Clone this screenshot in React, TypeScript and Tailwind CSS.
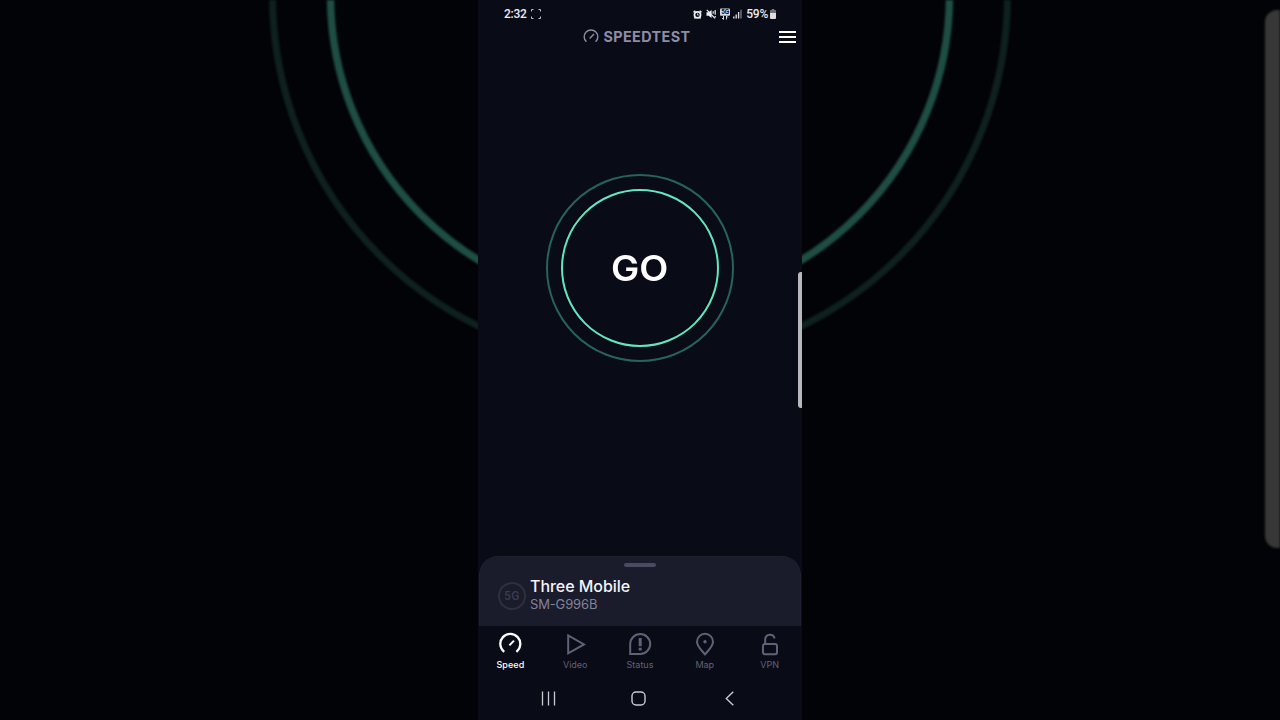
import { ReactNode } from "react";

const tabs: { label: string; active?: boolean; icon: ReactNode }[] = [
  {
    label: "Speed",
    active: true,
    icon: (
      <>
        <path d="M6.2 19.8A10 10 0 1 1 18.4 19.8" />
        <path d="M11.4 13.4L16 8.6" strokeWidth="2" />
      </>
    ),
  },
  { label: "Video", icon: <path d="M5.2 3.4V21.4L21 12.4Z" /> },
  {
    label: "Status",
    icon: (
      <>
        <path d="M2.2 22V12A10 10 0 1 1 12.2 22Z" />
        <path d="M12.2 6V14.2M12.2 15.8V18.4" strokeWidth="3" />
      </>
    ),
  },
  {
    label: "Map",
    icon: (
      <>
        <path d="M12 22.4C8.6 18.2 4 14.6 4 9.8A8 8 0 0 1 20 9.8C20 14.6 15.4 18.2 12 22.4Z" />
        <circle cx="12" cy="9.8" r="1.7" fill="currentColor" stroke="none" />
      </>
    ),
  },
  {
    label: "VPN",
    icon: (
      <>
        <rect x="5" y="12" width="14" height="10.2" rx="2" />
        <path d="M7.2 12V7A4.8 4.8 0 0 1 16.6 6.4" />
      </>
    ),
  },
];

function Backdrop() {
  return (
    <div className="absolute inset-0 bg-[#020307]">
      <svg className="h-full w-full blur-[0.8px]" viewBox="0 0 1280 720" fill="none">
        <circle cx="640" cy="-4" r="367.5" stroke="#0e211f" strokeWidth="7" />
        <circle cx="640" cy="-4" r="309.5" stroke="#1e4e43" strokeWidth="7.5" />
        <rect x="1265" y="10" width="40" height="538" rx="12" fill="#373737" />
      </svg>
    </div>
  );
}

function StatusBar() {
  return (
    <div className="flex h-7 items-center justify-between pl-[26px] pr-[26px] font-['Roboto',sans-serif] text-[12px] font-medium leading-4 tracking-[-0.25px] text-[#eeeef2]">
      <div className="flex items-center gap-1">
        <span>2:32</span>
        <svg className="h-[10px] w-[10px]" viewBox="0 0 10 10" fill="none" stroke="#c0c0c8" strokeWidth="1">
          <path d="M.5 2.5V.5H2.5M7.5 .5H9.5V2.5M9.5 7.5V9.5H7.5M2.5 9.5H.5V7.5" />
        </svg>
      </div>
      <div className="flex items-center">
        <svg className="mr-1 h-[9px] w-[9px]" viewBox="0 0 10 10" fill="none" stroke="#eeeef2">
          <circle cx="5" cy="5.4" r="3.4" strokeWidth="1.9" />
          <path d="M.6 2.6L2.6 .9M9.4 2.6L7.4 .9M1.6 9.4L2.6 8.2M8.4 9.4L7.4 8.2" strokeWidth="1.6" />
          <path d="M5 3.8V5.6H6.4" strokeWidth=".9" />
        </svg>
        <svg className="mr-1 h-[10px] w-[10px]" viewBox="0 0 10 10" fill="none" stroke="#eeeef2">
          <path d="M.5 3.2H2.6L5.6 1V9L2.6 6.8H.5Z" fill="#eeeef2" stroke="none" />
          <path d="M.8 .8L9 9.4" strokeWidth="1.2" />
          <path d="M7.2 2.2V4.8M9.2 1V5.8M9.2 7V8.6" strokeWidth="1.2" />
        </svg>
        <svg className="mr-[3px] h-3 w-[10px]" viewBox="0 0 10 12">
          <rect x="0" y=".5" width="10" height="7.2" rx="1" fill="#d9d9de" />
          <text x="5" y="6.4" textAnchor="middle" fontSize="6.5" fontWeight="700" fill="#0b0c18">
            5G
          </text>
          <path d="M3.5 8V11.5M2 10L3.5 11.5M6.5 11.5V8M8 9.5L6.5 8" stroke="#d9d9de" fill="none" />
        </svg>
        <svg className="mr-1 h-[10px] w-[9px]" viewBox="0 0 9 10" strokeWidth="1.4" stroke="#d9d9de">
          <path d="M.8 7.5V9.5M3.2 5.5V9.5M5.6 3V9.5" />
          <path d="M8 .8V9.5" stroke="#777781" />
        </svg>
        <span>59%</span>
        <svg className="ml-[2px] h-[10px] w-[6px]" viewBox="0 0 7 10" preserveAspectRatio="none">
          <path d="M2 0H5V1H6A1 1 0 0 1 7 2V4H0V2A1 1 0 0 1 1 1H2Z" fill="#73737c" />
          <path d="M0 4H7V9A1 1 0 0 1 6 10H1A1 1 0 0 1 0 9Z" fill="#dededf" />
        </svg>
      </div>
    </div>
  );
}

function Header() {
  return (
    <div className="grid h-[18px] grid-cols-[1fr_auto_1fr] items-center pr-[6px]">
      <span />
      <div className="flex items-center gap-1 text-[#8e8da3]">
        <svg className="h-4 w-4" viewBox="0 0 16 16" fill="none" stroke="currentColor" strokeWidth="1.4">
          <path d="M3.4 12.8A6.8 6.8 0 1 1 12.6 12.8" />
          <path d="M6.6 9.6L11 5" />
        </svg>
        <h1 className="text-[14.4px] font-bold leading-none tracking-[0.4px]">SPEEDTEST</h1>
      </div>
      <button className="justify-self-end" aria-label="Menu">
        <svg className="h-3 w-[17px]" viewBox="0 0 17 12" stroke="#fff" strokeWidth="2">
          <path d="M0 1H17M0 6H17M0 11H17" />
        </svg>
      </button>
    </div>
  );
}

export default function App() {
  return (
    <div className="relative flex h-[720px] w-[1280px] justify-center overflow-hidden">
      <Backdrop />
      <div className="relative flex w-[324px] flex-col bg-[#090b17] font-['Inter',sans-serif]">
        <StatusBar />
        <Header />

        {/* Go button */}
        <div className="flex flex-1 justify-center pt-32">
          <button className="flex h-[188px] w-[188px] items-center justify-center rounded-full border-2 border-[#28625d]">
            <span className="flex h-[158px] w-[158px] items-center justify-center rounded-full border-2 border-[#62e8bf] text-[35px] font-semibold text-white">
              <span className="scale-x-[1.08]">GO</span>
            </span>
          </button>
        </div>

        {/* Connection card */}
        <div className="mx-px flex h-[70px] flex-col rounded-t-[19px] border border-b-0 border-[#1f2030] bg-[#1a1b2b]">
          <div className="mx-auto mt-[6px] h-1 w-8 rounded-full bg-[#4b4a61]" />
          <div className="flex items-center gap-1 pl-[18px] pt-[9px]">
            <span className="mt-[3px] flex h-7 w-7 items-center justify-center rounded-full border-2 border-[#2f2f42] font-['Roboto',sans-serif] text-[12px] font-medium tracking-[0.5px] text-[#3c3c50]">
              5G
            </span>
            <div>
              <p className="text-base font-medium leading-[20px] tracking-[-0.05px] text-[#f4f4f8]">Three Mobile</p>
              <p className="text-[13px] leading-4 tracking-[-0.15px] text-[#83829a]">SM-G996B</p>
            </div>
          </div>
        </div>

        {/* Tabs */}
        <nav className="grid h-[50px] grid-cols-5 pt-[6px]">
          {tabs.map((tab) => (
            <button
              key={tab.label}
              className={`flex flex-col items-center ${tab.active ? "text-white" : "text-[#626175]"}`}
            >
              <svg
                className="h-6 w-6"
                viewBox="0 0 24 24"
                fill="none"
                stroke="currentColor"
                strokeWidth={tab.active ? 2.3 : 2}
              >
                {tab.icon}
              </svg>
              <span className={`text-[9px] leading-[18px] ${tab.active ? "font-medium tracking-[0.1px]" : ""}`}>
                {tab.label}
              </span>
            </button>
          ))}
        </nav>

        {/* System navigation */}
        <div className="flex h-11 items-center pl-[63px] text-[#c9c9d0]">
          <svg className="h-[15px] w-[15px]" viewBox="0 0 15 15" stroke="currentColor" strokeWidth="1.3">
            <path d="M1.5 .5V14.5M7.5 .5V14.5M13.5 .5V14.5" />
          </svg>
          <svg
            className="ml-[75px] h-[15px] w-[15px]"
            viewBox="0 0 15 15"
            fill="none"
            stroke="currentColor"
            strokeWidth="1.4"
          >
            <rect x="1" y="1" width="13" height="13" rx="4" />
          </svg>
          <svg
            className="ml-[79px] h-[15px] w-[9px]"
            viewBox="0 0 9 15"
            fill="none"
            stroke="currentColor"
            strokeWidth="1.4"
          >
            <path d="M8.3 .7L1.3 7.5L8.3 14.3" />
          </svg>
        </div>

        {/* Edge panel handle */}
        <div className="absolute right-0 top-[272px] h-[136px] w-1 rounded-l-[3px] bg-[#b7b7bc]" />
      </div>
    </div>
  );
}
